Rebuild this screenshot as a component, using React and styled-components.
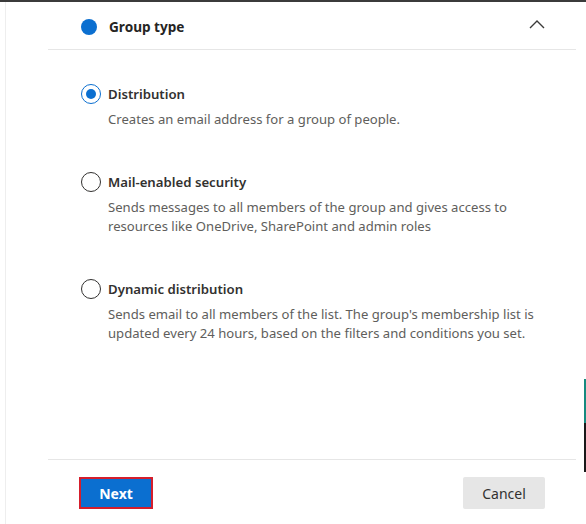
import React from "react";
import styled, { createGlobalStyle } from "styled-components";

const Global = createGlobalStyle`
  html, body { margin: 0; padding: 0; background: #ffffff; }
  body { font-family: "Segoe UI", "Noto Sans", "Open Sans", sans-serif; }
  * { box-sizing: border-box; }
`;

const Frame = styled.div`
  position: relative;
  width: 586px;
  height: 524px;
  overflow: hidden;
  display: flex;
  flex-direction: column;
  background: #ffffff;
`;

const TopBar = styled.div`
  height: 2px;
  flex: none;
  background: #3b3b3b;
`;

const Body = styled.div`
  flex: 1;
  display: flex;
`;

const Gutter = styled.div`
  width: 6px;
  flex: none;
  border-right: 1px solid #eeeeee;
`;

const Panel = styled.div`
  flex: 1;
  display: flex;
  flex-direction: column;
  padding: 0 10px 0 42px;
`;

const Header = styled.div`
  height: 48px;
  display: flex;
  align-items: center;
  padding: 2px 31px 0 33px;
  border-bottom: 1px solid #e6e6e6;
`;

const StepDot = styled.span`
  width: 16px;
  height: 16px;
  border-radius: 50%;
  background: #0b6fd0;
  flex: none;
`;

const Title = styled.h2`
  margin: 0 0 0 12px;
  flex: 1;
  font-size: 13.6px;
  font-weight: 700;
  color: #252423;
  line-height: 20px;
`;

const Chevron = styled.svg`
  width: 16px;
  height: 10px;
  margin-top: -6px;
`;

const Options = styled.div`
  flex: 1;
  display: flex;
  flex-direction: column;
  gap: 43px;
  padding: 34px 20px 0 33px;
`;

const Option = styled.label`
  display: flex;
  flex-direction: column;
  gap: 6px;
`;

const LabelRow = styled.div`
  display: flex;
  align-items: center;
  gap: 7px;
  height: 20px;
`;

const Radio = styled.span`
  width: 20px;
  height: 20px;
  border-radius: 50%;
  flex: none;
  border: 1px solid ${(p) => (p.$checked ? "#0b6fd0" : "#323130")};
  display: flex;
  align-items: center;
  justify-content: center;
  &::after {
    content: "";
    width: 10px;
    height: 10px;
    border-radius: 50%;
    background: ${(p) => (p.$checked ? "#0b6fd0" : "transparent")};
  }
`;

const OptionTitle = styled.span`
  font-size: 13.2px;
  font-weight: 600;
  color: #323130;
  line-height: 20px;
`;

const Description = styled.p`
  margin: 0 0 0 27px;
  font-size: 13.1px;
  line-height: 19px;
  color: #605e5c;
`;

const Footer = styled.div`
  height: 65px;
  flex: none;
  display: flex;
  justify-content: space-between;
  align-items: flex-start;
  padding: 17px 31px 0 31px;
  border-top: 1px solid #e6e6e6;
`;

const Button = styled.button`
  height: 32px;
  font-family: inherit;
  font-size: 14px;
  font-weight: 600;
  cursor: pointer;
  border-radius: 2px;
  padding: 0;
`;

const PrimaryButton = styled(Button)`
  width: 74px;
  background: #0b6fd0;
  color: #ffffff;
  font-weight: 700;
  border: 2px solid #d51e2c;
  border-radius: 0;
`;

const SecondaryButton = styled(Button)`
  width: 82px;
  background: #e6e6e6;
  color: #323130;
  font-weight: 400;
  border: none;
`;

const EdgeStrip = styled.div`
  position: absolute;
  right: 0;
  top: 379px;
  width: 2px;
  display: flex;
  flex-direction: column;
`;

const EdgeSegment = styled.div`
  height: ${(p) => p.$h}px;
  background: ${(p) => p.$c};
`;

const options = [
  {
    title: "Distribution",
    desc: ["Creates an email address for a group of people."],
    checked: true,
  },
  {
    title: "Mail-enabled security",
    desc: [
      "Sends messages to all members of the group and gives access to",
      "resources like OneDrive, SharePoint and admin roles",
    ],
  },
  {
    title: "Dynamic distribution",
    desc: [
      "Sends email to all members of the list. The group's membership list is",
      "updated every 24 hours, based on the filters and conditions you set.",
    ],
  },
];

export default function App() {
  return (
    <>
      <Global />
      <Frame>
        <TopBar />
        <Body>
          <Gutter />
          <Panel>
            <Header>
              <StepDot />
              <Title>Group type</Title>
              <Chevron viewBox="0 0 16 10">
                <path d="M1 9 L8 2 L15 9" fill="none" stroke="#3b3a39" strokeWidth="1.4" />
              </Chevron>
            </Header>
            <Options>
              {options.map((o) => (
                <Option key={o.title}>
                  <LabelRow>
                    <Radio $checked={o.checked} />
                    <OptionTitle>{o.title}</OptionTitle>
                  </LabelRow>
                  <Description>
                    {o.desc.map((line, i) => (
                      <React.Fragment key={i}>
                        {line}
                        {i < o.desc.length - 1 && <br />}
                      </React.Fragment>
                    ))}
                  </Description>
                </Option>
              ))}
            </Options>
            <Footer>
              <PrimaryButton>Next</PrimaryButton>
              <SecondaryButton>Cancel</SecondaryButton>
            </Footer>
          </Panel>
        </Body>
        <EdgeStrip>
          <EdgeSegment $h={44} $c="#178a80" />
          <EdgeSegment $h={49} $c="#1a1a1a" />
        </EdgeStrip>
      </Frame>
    </>
  );
}
